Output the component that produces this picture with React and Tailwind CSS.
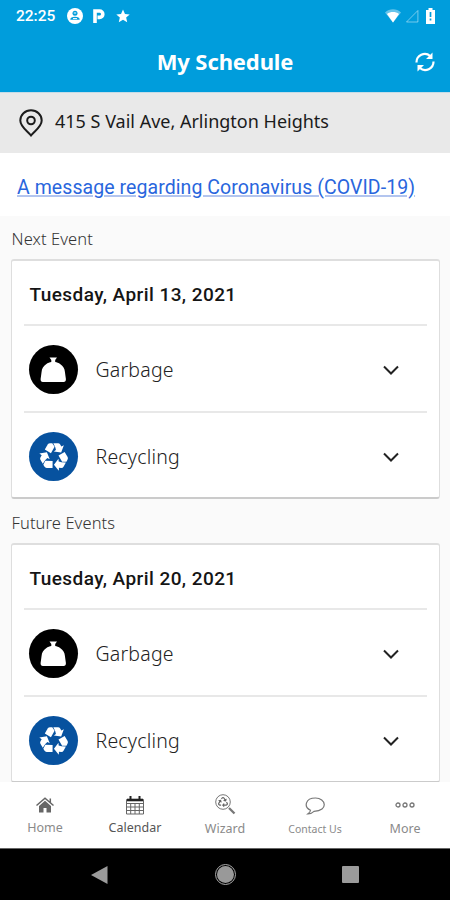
import React from 'react';
import { FaRecycle } from 'react-icons/fa';

function Garbage() {
  return (
    <span className="flex h-[49px] w-[49px] items-center justify-center rounded-full bg-black">
      <svg width="49" height="49" viewBox="0 0 49 49" fill="#fff">
        <path d="M20.500 12.500h7.500l-1.800 2.500v2c1.500.2 3.500.8 5.200 2.200 2.600 1.900 4.300 4.200 4.500 7.600.2 2.600.8 4.900 1 7.200.2 2-.8 3-2.200 3H13.800c-1.400 0-2.400-1-2.200-3 .2-2.300.8-4.600 1-7.200.2-3.400 1.900-5.700 4.500-7.600 1.700-1.400 3.700-2 5.200-2.200v-2z" />
      </svg>
    </span>
  );
}

function RecycleArm({ turn }) {
  return (
    <g transform={`rotate(${turn})`}>
      <path d="M-9.500-7.200L-6.500-12.500Q-5.700-13.800-4-13.800H-1.800L.600-10-3.200-3.500z" />
      <path d="M-.700-13.800H4.200Q5.600-13.800 6.400-12.400L7.600-10.300 10.200-11.600 7.400-4.200-.200-5.200 2-6.700 1.300-9.600z" />
    </g>
  );
}

function Recycling() {
  return (
    <span className="flex h-[49px] w-[49px] items-center justify-center rounded-full bg-[#07529f]">
      <svg width="30" height="30" viewBox="-15.500 -15 31 31" fill="#fff">
        <RecycleArm turn={0} />
        <RecycleArm turn={120} />
        <RecycleArm turn={240} />
      </svg>
    </span>
  );
}

function Row({ icon, label }) {
  return (
    <div className="mx-3 flex h-[87px] items-center border-t-2 border-[#e8e8e8] pt-[2px] pr-[27px] pl-[5px]">
      {icon}
      <span className="ml-[17.500px] flex-1 text-[19.500px] font-light tracking-[0.2px] text-[#222]">{label}</span>
      <svg width="18" height="12" viewBox="0 0 18 12" fill="none" stroke="#222" strokeWidth="2">
        <path d="M2 2.500l7 7 7-7" />
      </svg>
    </div>
  );
}

function Card({ date }) {
  return (
    <section className="mr-[10px] ml-[11px] h-[240px] rounded-[3px] border border-t-2 border-b-2 border-[#dedede] border-b-[#cbcbcb] bg-white">
      <h2 className="flex h-[63px] items-center pt-[6px] pl-[17.500px] font-[Roboto] text-[19px] font-medium tracking-[0.430px] text-[#151515]">{date}</h2>
      <Row icon={<Garbage />} label="Garbage" />
      <Row icon={<Recycling />} label="Recycling" />
    </section>
  );
}

function Tab({ label, children, className = '' }) {
  return (
    <div className="flex w-[90px] flex-col items-center text-[#8a8a8a]">
      <div className="flex h-[45px] items-center justify-center">{children}</div>
      <span className={`leading-[2px] whitespace-nowrap ${className}`}>{label}</span>
    </div>
  );
}

export default function App() {
  return (
    <div className="flex h-[900px] w-[450px] flex-col overflow-hidden bg-[#fafafa] font-['Noto_Sans',sans-serif]">
      <header className="h-[92px] shrink-0 bg-[#009ddc] text-white">
        <div className="flex h-8 items-center pr-[15px] pl-4">
          <span className="w-[51px] pt-px font-[Roboto] text-[15.500px] font-medium">22:25</span>
          <svg width="16" height="16" viewBox="0 0 16 16" fill="#fff">
            <circle cx="8" cy="8" r="8" />
            <circle cx="8" cy="5.300" r="2.500" fill="#009ddc" />
            <path d="M3.300 11.800c0-2.200 1.800-3 4.700-3s4.700.8 4.700 3z" fill="#009ddc" />
            <path d="M6.800 5h2.400M6 10.600h4" stroke="#fff" strokeWidth="1" />
          </svg>
          <svg className="ml-[10px]" width="12" height="14" viewBox="0 0 12 14" fill="none" stroke="#fff" strokeWidth="3.600">
            <path d="M2 14V2h4.600a2.900 2.900 0 010 6.400H4.500" />
          </svg>
          <svg className="ml-[11px]" width="14" height="14" viewBox="0 0 24 24" fill="#fff">
            <path d="M12 1l3.400 7.500 8.100.8-6.100 5.400 1.800 8L12 18.600l-7.200 4.100 1.800-8L.5 9.300l8.100-.8z" />
          </svg>
          <span className="flex-1" />
          <svg width="16" height="14" viewBox="0 0 16 14">
            <path d="M0 3.500C4.500-.8 11.500-.8 16 3.500L8 13.500z" fill="#fff" opacity=".4" />
            <path d="M2 5C5.500 2.400 10.500 2.400 14 5l-6 8.500z" fill="#fff" />
          </svg>
          <svg className="ml-1" width="14" height="14" viewBox="0 0 14 14">
            <path d="M12.900 1.500v11.500H1.500z" fill="none" stroke="#fff" opacity=".45" />
          </svg>
          <svg className="ml-[7px]" width="9" height="16" viewBox="0 0 9 16">
            <path d="M0 2h2.500V0h4v2H9v14H0z" fill="#fff" />
            <path d="M4.500 4v5M4.500 10.500v2" stroke="#009ddc" strokeWidth="1.700" />
          </svg>
        </div>
        <div className="flex h-[58px] items-center pr-[15px]">
          <span className="w-[35px]" />
          <h1 className="flex-1 pt-px text-center text-[22px] font-bold tracking-[-0.100px]">My Schedule</h1>
          <svg className="mt-[2px]" width="20" height="20" viewBox="0 0 20 20" fill="none" stroke="#fff" strokeWidth="2.200">
            <path d="M1.500 10.500A8.300 8.300 0 0115.200 4M18.500 9.500A8.300 8.300 0 014.800 16" />
            <path d="M17.500.5v6.500H11zM2.500 19.500V13H9z" fill="#fff" stroke="none" />
          </svg>
        </div>
      </header>

      <div className="flex h-[61px] shrink-0 items-center border-t border-[#c5dce7] bg-[#e9e9e9] pl-[19px]">
        <svg width="24" height="28" viewBox="0 0 24 28" fill="none" stroke="#1c1c1c" strokeWidth="2">
          <path d="M12 26.500C8.500 22 1.300 17.800 1.300 11.500a10.700 10.200 0 0121.400 0C22.700 17.800 15.500 22 12 26.500z" />
          <circle cx="12" cy="11.500" r="3.800" />
        </svg>
        <span className="mb-[4px] ml-[12px] text-[18px] text-[#1b1b1b]">415 S Vail Ave, Arlington Heights</span>
      </div>

      <div className="flex h-[63px] shrink-0 items-center bg-white pt-[7px] pl-[17px]">
        <a className="font-[Roboto] text-[19.500px] tracking-[0.070px] text-[#2966dd] underline decoration-[#b3c5ef] decoration-2 underline-offset-1">A message regarding Coronavirus (COVID-19)</a>
      </div>

      <main className="h-[566px] shrink-0 overflow-hidden">
        <h3 className="flex h-[43px] items-center pt-[3px] pl-[11.500px] text-[16.500px] font-light tracking-[0.1px] text-[#333]">Next Event</h3>
        <Card date="Tuesday, April 13, 2021" />
        <h3 className="flex h-[44px] items-center pt-[4px] pl-[11.500px] text-[16.500px] font-light tracking-[0.1px] text-[#333]">Future Events</h3>
        <Card date="Tuesday, April 20, 2021" />
      </main>

      <nav className="flex h-[66px] shrink-0 bg-white">
        <Tab label="Home" className="text-[12.500px]">
          <svg width="18" height="16" viewBox="0 0 18 16" fill="#666">
            <path d="M9 3.800l6 5.200v6.500h-4.500v-4.500h-3v4.500H3V9z" />
            <path d="M.5 8.500L9 1.300l8.500 7.200M14.300 1.500v4" fill="none" stroke="#666" strokeWidth="1.500" />
          </svg>
        </Tab>
        <Tab label="Calendar" className="text-[12.500px] text-[#555]">
          <svg className="mt-[2px]" width="18" height="19" viewBox="0 0 18 19" fill="none" stroke="#666">
            <path d="M.5 3.500h17v14.500H.5zM.5 7.500h17M.5 11h17M.5 14.500h17M4.700 7v11M9 7v11M13.300 7v11" />
            <path d="M1 4h16" stroke="#222" strokeWidth="2.600" />
            <path d="M4.500 0v5M13.500 0v5" stroke="#222" strokeWidth="2" />
          </svg>
        </Tab>
        <Tab label="Wizard" className="pt-px text-[12.500px]">
          <span className="relative">
            <svg width="21" height="21" viewBox="0 0 21 21" fill="none" stroke="#777">
              <circle cx="8" cy="8" r="7.300" />
              <path d="M14 14l5.500 5.500" strokeWidth="2.300" />
            </svg>
            <FaRecycle className="absolute top-[3px] left-[3px]" size={10} color="#666" />
          </span>
        </Tab>
        <Tab label="Contact Us" className="pt-px text-[10.500px]">
          <svg className="mt-[2px]" width="21" height="18" viewBox="0 0 21 18" fill="none" stroke="#777" strokeWidth="1.200">
            <path d="M5.500 13.200C-1.500 10 .2 1 10.500 1s13.500 12.800-1.500 13.300c-1.500 1.500-3.500 2.500-6 2.500 1.500-1 2.300-2 2.500-3.600z" />
          </svg>
        </Tab>
        <Tab label="More" className="pt-px text-[12.500px]">
          <svg width="20" height="6" viewBox="0 0 20 6" fill="none" stroke="#777" strokeWidth="1.300">
            <circle cx="3" cy="3" r="2" />
            <circle cx="10" cy="3" r="2" />
            <circle cx="17" cy="3" r="2" />
          </svg>
        </Tab>
      </nav>

      <footer className="flex h-[52px] shrink-0 items-center justify-between border-t border-[#666] bg-black pr-[91px] pl-[91px]">
        <svg width="17" height="18" viewBox="0 0 17 18" fill="#9b9b9b"><path d="M0 9L16.500 0v18z" /></svg>
        <span className="flex h-[21px] w-[21px] items-center justify-center rounded-full border border-[#aaa]">
          <span className="h-[17px] w-[17px] rounded-full bg-[#999]" />
        </span>
        <span className="h-[17px] w-[17px] rounded-[1px] bg-[#9b9b9b]" />
      </footer>
    </div>
  );
}
